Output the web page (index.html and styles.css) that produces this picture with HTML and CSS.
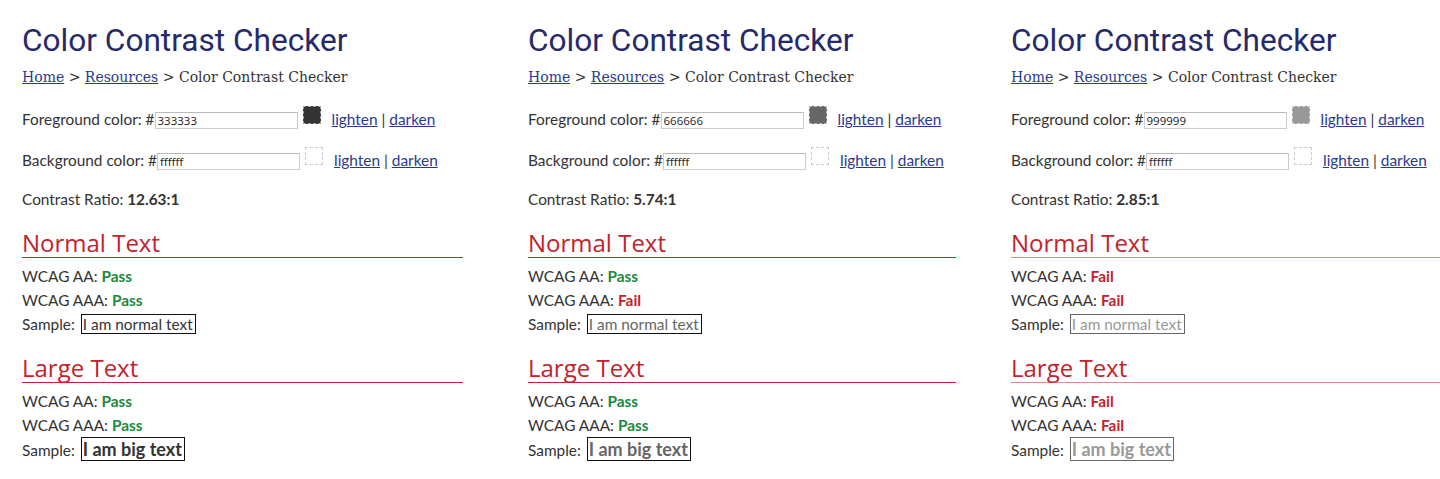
FILE: index.html
```html
<!DOCTYPE html>
<html lang="en">
<head>
    <meta charset="UTF-8">
    <meta name="viewport" content="width=device-width, initial-scale=1.0">
    <title>Color Contrast Checker</title>
    <link rel="stylesheet" href="styles.css">
</head>
<body>
    <div class="shots">

        <!-- 333333 on ffffff -->
        <div class="checker first">
            <h1>Color Contrast Checker</h1>
            <p class="crumbs"><a href="#">Home</a> &gt; <a href="#">Resources</a> &gt; Color Contrast Checker</p>

            <div class="color-row fg-row">
                <label>Foreground color: #</label>
                <input type="text" value="333333">
                <span class="swatch fg" style="background-color: #333333;"></span>
                <span class="tools"><a href="#">lighten</a> | <a href="#">darken</a></span>
            </div>
            <div class="color-row">
                <label>Background color: #</label>
                <input type="text" value="ffffff">
                <span class="swatch"></span>
                <span class="tools"><a href="#">lighten</a> | <a href="#">darken</a></span>
            </div>

            <p class="ratio">Contrast Ratio: <strong>12.63:1</strong></p>

            <h2>Normal Text</h2>
            <p>WCAG AA: <span class="pass">Pass</span></p>
            <p>WCAG AAA: <span class="pass">Pass</span></p>
            <p>Sample: <span class="sample" style="color: #333333;">I am normal text</span></p>

            <h2>Large Text</h2>
            <p>WCAG AA: <span class="pass">Pass</span></p>
            <p>WCAG AAA: <span class="pass">Pass</span></p>
            <p>Sample: <span class="sample big" style="color: #333333;">I am big text</span></p>
        </div>

        <!-- 666666 on ffffff -->
        <div class="checker second">
            <h1>Color Contrast Checker</h1>
            <p class="crumbs"><a href="#">Home</a> &gt; <a href="#">Resources</a> &gt; Color Contrast Checker</p>

            <div class="color-row fg-row">
                <label>Foreground color: #</label>
                <input type="text" value="666666">
                <span class="swatch fg" style="background-color: #666666;"></span>
                <span class="tools"><a href="#">lighten</a> | <a href="#">darken</a></span>
            </div>
            <div class="color-row">
                <label>Background color: #</label>
                <input type="text" value="ffffff">
                <span class="swatch"></span>
                <span class="tools"><a href="#">lighten</a> | <a href="#">darken</a></span>
            </div>

            <p class="ratio">Contrast Ratio: <strong>5.74:1</strong></p>

            <h2>Normal Text</h2>
            <p>WCAG AA: <span class="pass">Pass</span></p>
            <p>WCAG AAA: <span class="fail">Fail</span></p>
            <p>Sample: <span class="sample" style="color: #666666;">I am normal text</span></p>

            <h2>Large Text</h2>
            <p>WCAG AA: <span class="pass">Pass</span></p>
            <p>WCAG AAA: <span class="pass">Pass</span></p>
            <p>Sample: <span class="sample big" style="color: #666666;">I am big text</span></p>
        </div>

        <!-- 999999 on ffffff -->
        <div class="checker third">
            <h1>Color Contrast Checker</h1>
            <p class="crumbs"><a href="#">Home</a> &gt; <a href="#">Resources</a> &gt; Color Contrast Checker</p>

            <div class="color-row fg-row">
                <label>Foreground color: #</label>
                <input type="text" value="999999">
                <span class="swatch fg" style="background-color: #999999;"></span>
                <span class="tools"><a href="#">lighten</a> | <a href="#">darken</a></span>
            </div>
            <div class="color-row">
                <label>Background color: #</label>
                <input type="text" value="ffffff">
                <span class="swatch"></span>
                <span class="tools"><a href="#">lighten</a> | <a href="#">darken</a></span>
            </div>

            <p class="ratio">Contrast Ratio: <strong>2.85:1</strong></p>

            <h2>Normal Text</h2>
            <p>WCAG AA: <span class="fail">Fail</span></p>
            <p>WCAG AAA: <span class="fail">Fail</span></p>
            <p>Sample: <span class="sample dim" style="color: #999999;">I am normal text</span></p>

            <h2>Large Text</h2>
            <p>WCAG AA: <span class="fail">Fail</span></p>
            <p>WCAG AAA: <span class="fail">Fail</span></p>
            <p>Sample: <span class="sample big dim" style="color: #999999;">I am big text</span></p>
        </div>

    </div>
</body>
</html>
```

FILE: styles.css
```css
body {
    margin: 0;
    background-color: #fff;
    color: #333;
    font-family: Lato, "Open Sans", sans-serif;
    font-size: 15.4px;
}

.shots {
    display: flex;
    align-items: flex-start;
}

.checker {
    padding-top: 22px;
    flex-shrink: 0;
}

.first {
    margin-left: 22px;
    width: 441px;
}

.second {
    margin-left: 65px;
    width: 428px;
}

.third {
    margin-left: 55px;
    width: 440px;
}

h1 {
    margin: 0;
    font-family: Roboto, sans-serif;
    font-weight: 400;
    font-size: 31.6px;
    line-height: 38px;
    color: #262a6a;
}

.crumbs {
    margin: 7px 0 0;
    font-family: "DejaVu Serif", serif;
    font-size: 14px;
    line-height: 20px;
}

a {
    color: #2a3a94;
    text-decoration: underline;
}

.color-row {
    display: flex;
    align-items: center;
    height: 22px;
    margin-top: 19px;
}

.fg-row {
    margin-top: 21px;
}

.color-row input {
    width: 143px;
    height: 17px;
    margin: 2px 0 0 0;
    padding: 0 2px;
    box-sizing: border-box;
    border: 1px solid #ccc;
    border-top-color: #bbb;
    font-family: "Open Sans", sans-serif;
    font-size: 11.5px;
    color: #222;
}

.swatch {
    width: 18px;
    height: 18px;
    margin: 0 0 8px 5px;
    box-sizing: border-box;
    border: 1px dashed #ccc;
    background-color: #fff;
}

/* dashed edge over the fill, like the colour picker preview */
.swatch.fg {
    border-color: rgba(255, 255, 255, 0.55);
}

.tools {
    margin-left: 11px;
}

.ratio {
    margin: 18px 0 0;
    line-height: 20px;
}

h2 {
    margin: 20px 0 0;
    font-family: "Open Sans", sans-serif;
    font-weight: 400;
    font-size: 24px;
    line-height: 28px;
    color: #c4222c;
    border-bottom: 1px solid #c4222c;
}

.third h2 {
    border-bottom-color: #e08a8e;
}

h2 + p {
    margin-top: 6px;
}

p {
    margin: 0;
    line-height: 24px;
}

.checker h2:last-of-type {
    margin-top: 18px;
}

.pass {
    color: #1a8a3c;
    font-weight: bold;
}

.fail {
    color: #c4222c;
    font-weight: bold;
}

.sample {
    border: 1px solid #111;
    padding: 0 2px 0 1px;
    margin-left: 2px;
}

.sample.big {
    font-weight: bold;
    font-size: 18px;
}

.sample.dim {
    border-color: #666;
}
```
